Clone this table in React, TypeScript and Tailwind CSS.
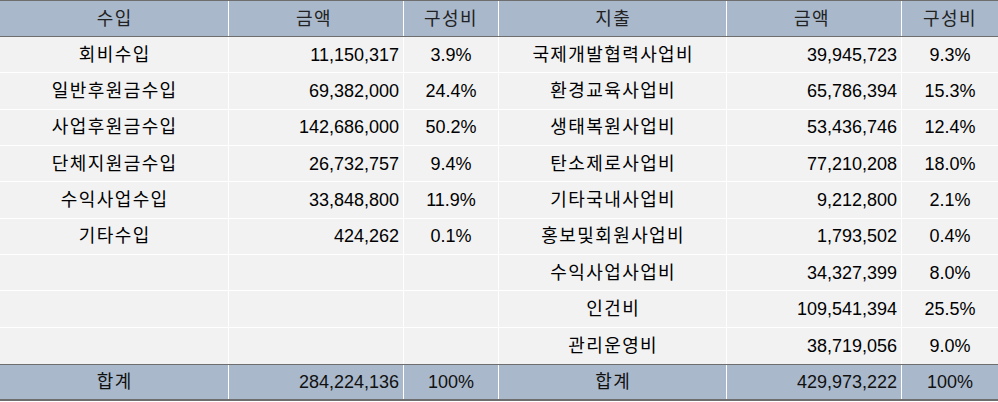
const income = [
  ["회비수입", "11,150,317", "3.9%"],
  ["일반후원금수입", "69,382,000", "24.4%"],
  ["사업후원금수입", "142,686,000", "50.2%"],
  ["단체지원금수입", "26,732,757", "9.4%"],
  ["수익사업수입", "33,848,800", "11.9%"],
  ["기타수입", "424,262", "0.1%"],
  ["", "", ""],
  ["", "", ""],
  ["", "", ""],
];

const expense = [
  ["국제개발협력사업비", "39,945,723", "9.3%"],
  ["환경교육사업비", "65,786,394", "15.3%"],
  ["생태복원사업비", "53,436,746", "12.4%"],
  ["탄소제로사업비", "77,210,208", "18.0%"],
  ["기타국내사업비", "9,212,800", "2.1%"],
  ["홍보및회원사업비", "1,793,502", "0.4%"],
  ["수익사업사업비", "34,327,399", "8.0%"],
  ["인건비", "109,541,394", "25.5%"],
  ["관리운영비", "38,719,056", "9.0%"],
];

const cell = "flex items-center border-r border-white";
const label = "tracking-[1.4px] pl-[1.4px]";

function Row({ cells, className }: { cells: string[]; className: string }) {
  return (
    <div className={`flex ${className}`}>
      <div className={`${cell} ${label} w-[229px] justify-center`}>{cells[0]}</div>
      <div className={`${cell} w-[175px] justify-end pr-[4px]`}>{cells[1]}</div>
      <div className={`${cell} w-[95px] justify-center`}>{cells[2]}</div>
      <div className={`${cell} ${label} w-[228px] justify-center`}>{cells[3]}</div>
      <div className={`${cell} w-[175px] justify-end pr-[4px]`}>{cells[4]}</div>
      <div className="flex items-center w-[96px] justify-center">{cells[5]}</div>
    </div>
  );
}

export default function App() {
  return (
    <div
      className="w-[998px] h-[402px] bg-white text-[18px] leading-none text-black"
      style={{ fontFamily: '"Liberation Sans", "Noto Sans CJK KR", sans-serif' }}
    >
      <Row
        cells={["수입", "금액", "구성비", "지출", "금액", "구성비"]}
        className="h-[37px] bg-[#a9b8cb] border-t border-b border-[#6e6e6e] text-[#222] [&>div]:tracking-[1.4px] [&>div:nth-child(2)]:justify-center [&>div:nth-child(5)]:justify-center"
      />
      {income.map((r, i) => (
        <Row
          key={i}
          cells={[...r, ...expense[i]]}
          className={`h-[36.33px] bg-[#f2f2f2] ${i < 8 ? "border-b border-white" : ""}`}
        />
      ))}
      <Row
        cells={["합계", "284,224,136", "100%", "합계", "429,973,222", "100%"]}
        className="h-[37px] bg-[#a9b8cb] border-t border-b-2 border-[#6e6e6e] text-[#111]"
      />
    </div>
  );
}
